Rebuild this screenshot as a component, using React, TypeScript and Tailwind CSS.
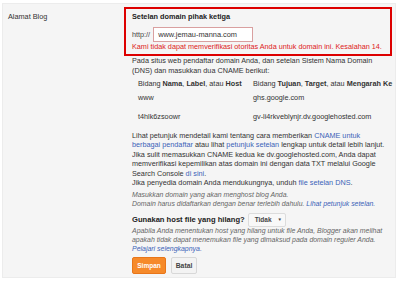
export default function App() {
  return (
    <div className="w-[400px] h-[283px] bg-white overflow-hidden pt-[3px] pl-[2px] font-['Liberation_Sans',Arial,sans-serif] text-[#222]">
      <div className="w-[394px] h-[275px] bg-[#f5f5f5] border border-[#ececec] flex overflow-hidden">
        <div className="w-[121px] shrink-0 pl-[5px] pt-[8px] text-[7.3px] leading-[10px] text-[#333]">
          Alamat Blog
        </div>
        <div className="flex-1 pt-[3px] text-[7.25px] leading-[10px] whitespace-nowrap">
          <div className="w-[268px] border-[2px] border-[#dd0000] pl-[6px] pt-[3px] pb-[2px]">
            <div className="font-bold text-[7.3px] leading-[10px] text-[#222]">Setelan domain pihak ketiga</div>
            <div className="flex items-center mt-[5px] h-[15px]">
              <span className="text-[#444]">http://</span>
              <div className="ml-[3px] w-[100px] h-[15px] bg-white border border-[#d9a0a0] pl-[4px] flex items-center text-[7.4px] text-[#333]">
                www.jemau-manna.com
              </div>
            </div>
            <div className="text-[#dd2222] leading-[10px]">
              Kami tidak dapat memverifikasi otoritas Anda untuk domain ini. Kesalahan 14.
            </div>
          </div>
          <div className="pl-[8px] text-[#333]">
            <p className="leading-[10px]">
              Pada situs web pendaftar domain Anda, dan setelan Sistem Nama Domain
              <br />
              (DNS) dan masukkan dua CNAME berikut:
            </p>
            <div className="ml-[6px] mt-[3px] grid grid-cols-[115px_1fr] leading-[10px]">
              <div>
                Bidang <b>Nama</b>, <b>Label</b>, atau <b>Host</b>
              </div>
              <div>
                Bidang <b>Tujuan</b>, <b>Target</b>, atau <b>Mengarah Ke</b>
              </div>
              <div className="mt-[4px]">www</div>
              <div className="mt-[4px]">ghs.google.com</div>
              <div className="mt-[9px]">t4hlk6zsoowr</div>
              <div className="mt-[9px]">gv-li4rkveblynjr.dv.googlehosted.com</div>
            </div>
            <p className="mt-[9px] leading-[9.4px]">
              Lihat petunjuk mendetail kami tentang cara memberikan <span className="text-[#3b63b8]">CNAME untuk</span>
              <br />
              <span className="text-[#3b63b8]">berbagai pendaftar</span> atau lihat{" "}
              <span className="text-[#3b63b8]">petunjuk setelan</span> lengkap untuk detail lebih lanjut.
              <br />
              Jika sulit memasukkan CNAME kedua ke dv.googlehosted.com, Anda dapat
              <br />
              memverifikasi kepemilikan atas domain ini dengan data TXT melalui Google
              <br />
              Search Console <span className="text-[#3b63b8]">di sini</span>.
              <br />
              Jika penyedia domain Anda mendukungnya, unduh{" "}
              <span className="text-[#3b63b8]">file setelan DNS</span>.
            </p>
            <p className="mt-[3px] leading-[9px] italic text-[#666] text-[6.9px]">
              Masukkan domain yang akan menghost blog Anda.
              <br />
              Domain harus didaftarkan dengan benar terlebih dahulu.{" "}
              <span className="text-[#3b63b8]">Lihat petunjuk setelan.</span>
            </p>
            <div className="mt-[5px] flex items-center h-[14px]">
              <span className="font-bold text-[7.6px] text-[#222]">Gunakan host file yang hilang?</span>
              <div className="ml-[3px] h-[14px] w-[38px] bg-[#f8f8f8] border border-[#dcdcdc] rounded-[2px] flex items-center pl-[6px] text-[6.5px] font-bold text-[#444]">
                Tidak
                <span className="ml-[6px] text-[4.5px]">▼</span>
              </div>
            </div>
            <p className="mt-[-1px] leading-[9px] italic text-[#666] text-[6.95px]">
              Apabila Anda menentukan host yang hilang untuk file Anda, Blogger akan melihat
              <br />
              apakah tidak dapat menemukan file yang dimaksud pada domain reguler Anda.
              <br />
              <span className="text-[#3b63b8]">Pelajari selengkapnya.</span>
            </p>
            <div className="mt-[4px] flex gap-[5px]">
              <div className="w-[34px] h-[17px] rounded-[2px] bg-[#f68a2a] border border-[#e8761a] flex items-center justify-center text-white font-bold text-[6.5px]">
                Simpan
              </div>
              <div className="w-[26px] h-[17px] rounded-[2px] bg-[#f3f3f3] border border-[#d8d8d8] flex items-center justify-center text-[#444] font-bold text-[6.8px]">
                Batal
              </div>
            </div>
          </div>
        </div>
      </div>
    </div>
  );
}
